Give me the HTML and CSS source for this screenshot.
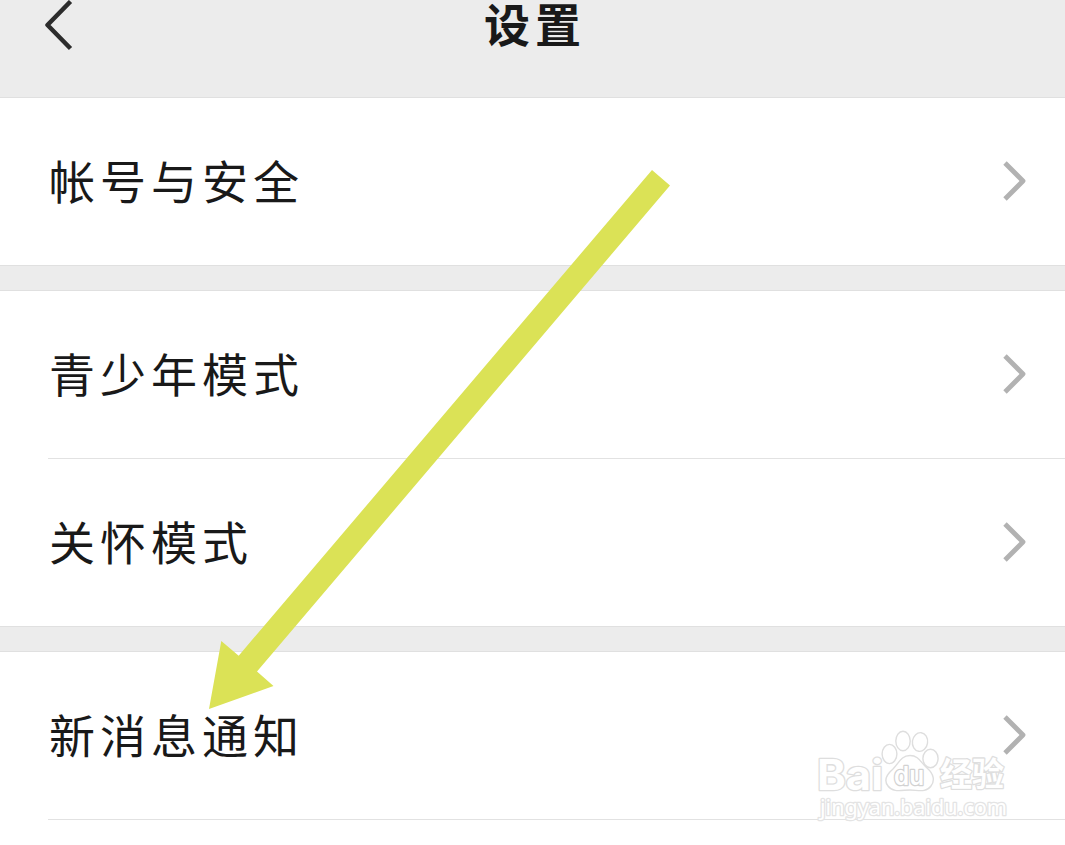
FILE: index.html
```
<!DOCTYPE html>
<html lang="zh-CN">
<head>
    <meta charset="UTF-8">
    <meta name="viewport" content="width=device-width, initial-scale=1.0">
    <title>设置</title>
    <link rel="stylesheet" href="styles.css">
</head>
<body>
    <header class="header">
        <svg class="back" viewBox="0 0 30 52"><path d="M26.5 1.5 L3.5 25 L26.5 48.5"/></svg>
        <h1>设置</h1>
    </header>

    <div class="group">
        <div class="row">
            <span class="label">帐号与安全</span>
            <svg class="chevron" viewBox="0 0 24 40"><path d="M2 2 L20 20 L2 38"/></svg>
        </div>
    </div>

    <div class="group">
        <div class="row">
            <span class="label">青少年模式</span>
            <svg class="chevron" viewBox="0 0 24 40"><path d="M2 2 L20 20 L2 38"/></svg>
        </div>
        <div class="row">
            <span class="label">关怀模式</span>
            <svg class="chevron" viewBox="0 0 24 40"><path d="M2 2 L20 20 L2 38"/></svg>
        </div>
    </div>

    <div class="group last">
        <div class="row">
            <span class="label">新消息通知</span>
            <svg class="chevron" viewBox="0 0 24 40"><path d="M2 2 L20 20 L2 38"/></svg>
        </div>
        <div class="divider"></div>
    </div>

    <!-- pointer to the notification row -->
    <svg class="arrow" viewBox="0 0 461 539">
        <polygon points="443,0 461,15.5 48,501.5 64.5,516 0,539 12.3,471 29.7,485.7"/>
    </svg>

    <svg class="watermark" viewBox="0 0 200 100">
        <g class="paw">
            <ellipse cx="74.5" cy="29" rx="7.4" ry="9.6"/>
            <ellipse cx="88" cy="16" rx="7.2" ry="9.8"/>
            <ellipse cx="105" cy="17" rx="7.6" ry="9.4" transform="rotate(8 105 17)"/>
            <ellipse cx="115.5" cy="33.5" rx="7.6" ry="9.2"/>
            <path d="M95 30.5 C86 30.5 84 38 78 44 C71 50 69 56 73 61 C78 68 87 65 95 65 C103 65 111 68 116 61 C120 56 119 49 112 43 C106 38 104 30.5 95 30.5 Z"/>
        </g>
        <text class="brand" x="2" y="64.5" textLength="66" lengthAdjust="spacingAndGlyphs">Bai</text>
        <text class="du" x="79" y="60" textLength="30" lengthAdjust="spacingAndGlyphs">du</text>
        <text class="brand-cn" x="125" y="61" textLength="64" lengthAdjust="spacingAndGlyphs">经验</text>
        <text class="url" x="5" y="90" textLength="187" lengthAdjust="spacingAndGlyphs">jingyan.baidu.com</text>
    </svg>
</body>
</html>
```
FILE: styles.css
```
* {
    box-sizing: border-box;
}

body {
    margin: 0;
    height: 845px;
    display: flex;
    flex-direction: column;
    position: relative;
    overflow: hidden;
    background: #ececec;
    color: #191919;
    font-family: "Noto Sans CJK SC", sans-serif;
}

.header {
    height: 97px;
    flex: none;
    display: grid;
    grid-template-columns: 1fr auto 1fr;
    align-items: start;
}

.header h1 {
    grid-column: 2;
    margin: 0;
    font-size: 46px;
    font-weight: 700;
    line-height: 44px;
    letter-spacing: 5px;
    padding-left: 5px;
}

.back {
    width: 30px;
    height: 52px;
    margin-left: 44px;
    fill: none;
    stroke: #2c2c2c;
    stroke-width: 4.5;
    stroke-linejoin: round;
}

.group {
    flex: none;
    background: #fff;
    border-top: 1px solid #e0e0e0;
    border-bottom: 1px solid #e0e0e0;
    margin-bottom: 24px;
}

.group.last {
    flex: 1;
    margin-bottom: 0;
    border-bottom: none;
}

.row {
    height: 167px;
    display: flex;
    justify-content: space-between;
    align-items: center;
    margin-left: 48px;
    padding-right: 38px;
    padding-bottom: 2px;
}

.row + .row {
    height: 168px;
    border-top: 1px solid #e2e2e2;
}

.divider {
    height: 1px;
    margin-left: 48px;
    background: #e2e2e2;
}

.label {
    font-size: 46px;
    line-height: 60px;
    letter-spacing: 5px;
    padding-left: 1px;
    margin-bottom: 3px;
}

.chevron {
    width: 24px;
    height: 40px;
    fill: none;
    stroke: #b2b2b2;
    stroke-width: 4.8;
    stroke-linejoin: round;
}

.arrow {
    position: absolute;
    left: 209px;
    top: 170px;
    width: 461px;
    height: 539px;
    fill: #dbe256;
}

.watermark {
    position: absolute;
    left: 815px;
    top: 725px;
    width: 200px;
    height: 100px;
    fill: #fff;
    stroke: #dedede;
    stroke-width: 1.4;
}

.watermark text {
    paint-order: stroke;
    stroke-width: 2.6;
    stroke-linejoin: round;
}

.brand {
    font: 700 42px Inter, sans-serif;
}

.watermark .du {
    font: 600 26px Inter, sans-serif;
    stroke: #d2d2d2;
}

.brand-cn {
    font: 700 33px "Noto Sans CJK SC", sans-serif;
}

.watermark .url {
    font: 400 21px "Noto Sans", sans-serif;
    stroke: #e4e4e4;
}
```
